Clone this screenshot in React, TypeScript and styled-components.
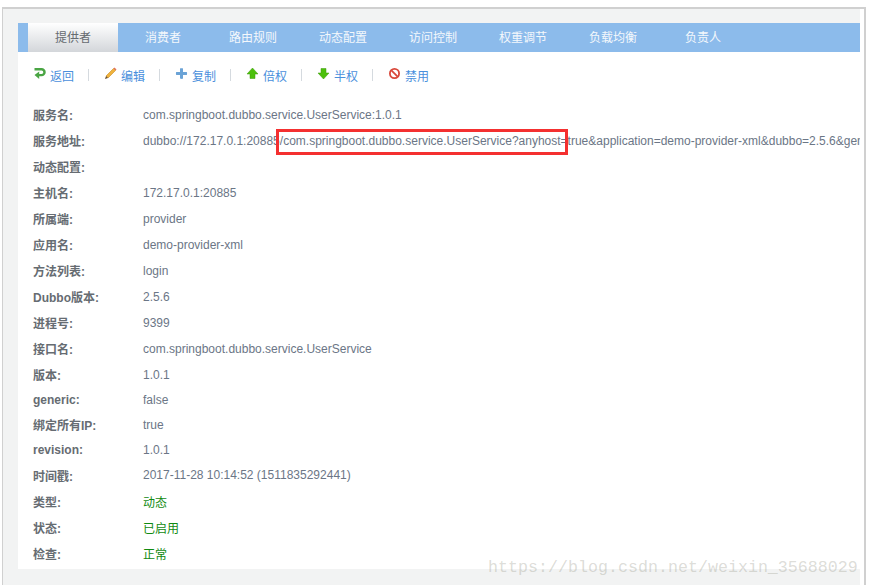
import React from 'react';
import styled, { createGlobalStyle } from 'styled-components';

const GlobalStyle = createGlobalStyle`
  html, body {
    margin: 0;
    padding: 0;
    background: #ffffff;
  }
  body {
    font-family: "Liberation Sans", "Noto Sans CJK SC", sans-serif;
    font-size: 12px;
  }
`;

const Page = styled.div`
  width: 869px;
  height: 587px;
  padding: 7px 3px 0 2px;
  box-sizing: border-box;
  overflow: hidden;
  position: relative;
`;

const Frame = styled.div`
  width: 864px;
  height: 578px;
  box-sizing: border-box;
  border-top: 2px solid #d0d0d0;
  border-left: 1px solid #d0d0d0;
  border-right: 2px solid #d0d0d0;
  padding-right: 4px;
`;

const Shell = styled.div`
  height: 576px;
  background: #f2f3f3;
  padding: 14px 0 0 15px;
  box-sizing: border-box;
`;

const Panel = styled.div`
  width: 842px;
  height: 546px;
  background: #ffffff;
  overflow: hidden;
`;

const TabBar = styled.div`
  display: flex;
  height: 29px;
  padding-left: 10px;
  background: #8cbbeb;
`;

const Tab = styled.div<{ $active?: boolean }>`
  width: 90px;
  line-height: 30px;
  text-align: center;
  color: ${p => (p.$active ? '#666b70' : '#f4f8fc')};
  background: ${p => (p.$active ? 'linear-gradient(#ffffff, #d3d6da)' : 'transparent')};
`;

const Toolbar = styled.div`
  display: flex;
  align-items: center;
  height: 20px;
  margin-top: 13px;
  padding-left: 15px;
`;

const Action = styled.a`
  display: flex;
  align-items: center;
  gap: 4px;
  width: 55px;
  color: #4a8fdc;
`;

const ActionIcon = styled.svg`
  width: 13px;
  height: 13px;
  flex: none;
  position: relative;
  top: -2px;
`;

const Divider = styled.span`
  width: 1px;
  height: 12px;
  flex: none;
  background: #d5dadf;
  margin-right: 15px;
`;

const Details = styled.div`
  margin-top: 17px;
  padding-left: 15px;
`;

const Row = styled.div<{ $compact?: boolean }>`
  display: flex;
  align-items: center;
  height: ${p => (p.$compact ? 25 : 26)}px;
  white-space: nowrap;
`;

const Label = styled.div<{ $lift?: boolean }>`
  width: 110px;
  flex: none;
  padding-bottom: ${p => (p.$lift ? 2 : 0)}px;
  font-weight: bold;
  color: #666c72;
`;

const Value = styled.div<{ $ok?: boolean }>`
  color: ${p => (p.$ok ? '#118a11' : '#6b7686')};
`;

const Highlight = styled.div`
  position: absolute;
  left: 276px;
  top: 129px;
  width: 292px;
  height: 26px;
  box-sizing: border-box;
  border: 3px solid #f43030;
`;

const Watermark = styled.div`
  position: absolute;
  left: 488px;
  top: 557px;
  font-family: "Liberation Mono", monospace;
  font-size: 16.67px;
  line-height: 22px;
  color: rgba(140, 140, 125, 0.3);
  white-space: nowrap;
`;

const tabs = ['提供者', '消费者', '路由规则', '动态配置', '访问控制', '权重调节', '负载均衡', '负责人'];

const icons: Record<string, React.ReactNode> = {
  back: (
    <path
      d="M1.5 1H8.6A3.9 3.9 0 0 1 8.6 9.3H6.2V12L1.5 8 6.2 4.6V6.9H8.6A1.5 1.5 0 0 0 8.6 3.5H1.5Z"
      fill="#4aa544"
    />
  ),
  edit: (
    <>
      <path d="M9.5 1.5l2 2-7.5 7.5-2-2z" fill="#f0b33c" stroke="#c98a22" strokeWidth="0.6" />
      <path d="M9.5 1.5l1-1 2 2-1 1z" fill="#e2705a" />
      <path d="M2 9l2 2-3 1z" fill="#6b5030" />
    </>
  ),
  copy: <path d="M5 1.5C5 1 8 1 8 1.5V5h3.7C12.2 5 12.2 8 11.7 8H8v3.5C8 12 5 12 5 11.5V8H1.3C.8 8 .8 5 1.3 5H5z" fill="#6ba3d6" />,
  up: <path d="M6.5 1L12 7H9v4.5H4V7H1z" fill="#4cc00c" stroke="#3c9a0a" strokeWidth="0.5" />,
  down: <path d="M6.5 12L12 6H9V1.5H4V6H1z" fill="#4cc00c" stroke="#3c9a0a" strokeWidth="0.5" />,
  ban: (
    <>
      <circle cx="6.5" cy="6.5" r="4.6" fill="#fff" stroke="#d9483b" strokeWidth="1.8" />
      <path d="M3.4 3.4l6.2 6.2" stroke="#d9483b" strokeWidth="1.8" />
    </>
  ),
};

const actions = [
  { icon: 'back', text: '返回' },
  { icon: 'edit', text: '编辑' },
  { icon: 'copy', text: '复制' },
  { icon: 'up', text: '倍权' },
  { icon: 'down', text: '半权' },
  { icon: 'ban', text: '禁用' },
];

const rows: { label: string; value?: string; ok?: boolean; compact?: boolean }[] = [
  { label: '服务名:', value: 'com.springboot.dubbo.service.UserService:1.0.1' },
  {
    label: '服务地址:',
    value:
      'dubbo://172.17.0.1:20885/com.springboot.dubbo.service.UserService?anyhost=true&application=demo-provider-xml&dubbo=2.5.6&generic=false&interface=com.springboot.dubbo.service.UserService',
  },
  { label: '动态配置:' },
  { label: '主机名:', value: '172.17.0.1:20885' },
  { label: '所属端:', value: 'provider' },
  { label: '应用名:', value: 'demo-provider-xml' },
  { label: '方法列表:', value: 'login' },
  { label: 'Dubbo版本:', value: '2.5.6' },
  { label: '进程号:', value: '9399' },
  { label: '接口名:', value: 'com.springboot.dubbo.service.UserService' },
  { label: '版本:', value: '1.0.1', compact: true },
  { label: 'generic:', value: 'false', compact: true },
  { label: '绑定所有IP:', value: 'true', compact: true },
  { label: 'revision:', value: '1.0.1', compact: true },
  { label: '时间戳:', value: '2017-11-28 10:14:52 (1511835292441)' },
  { label: '类型:', value: '动态', ok: true },
  { label: '状态:', value: '已启用', ok: true },
  { label: '检查:', value: '正常', ok: true },
];

const App: React.FC = () => (
  <Page>
    <GlobalStyle />
    <Frame>
      <Shell>
        <Panel>
          <TabBar>
            {tabs.map((t, i) => (
              <Tab key={t} $active={i === 0}>{t}</Tab>
            ))}
          </TabBar>
          <Toolbar>
            {actions.map((a, i) => (
              <React.Fragment key={a.text}>
                <Action>
                  <ActionIcon viewBox="0 0 13 13">{icons[a.icon]}</ActionIcon>
                  {a.text}
                </Action>
                {i < actions.length - 1 && <Divider />}
              </React.Fragment>
            ))}
          </Toolbar>
          <Details>
            {rows.map((r, i) => (
              <Row key={r.label} $compact={r.compact}>
                <Label $lift={i < 10}>{r.label}</Label>
                <Value $ok={r.ok}>{r.value}</Value>
              </Row>
            ))}
          </Details>
        </Panel>
      </Shell>
    </Frame>
    <Highlight />
    <Watermark>https://blog.csdn.net/weixin_35688029</Watermark>
  </Page>
);

export default App;
